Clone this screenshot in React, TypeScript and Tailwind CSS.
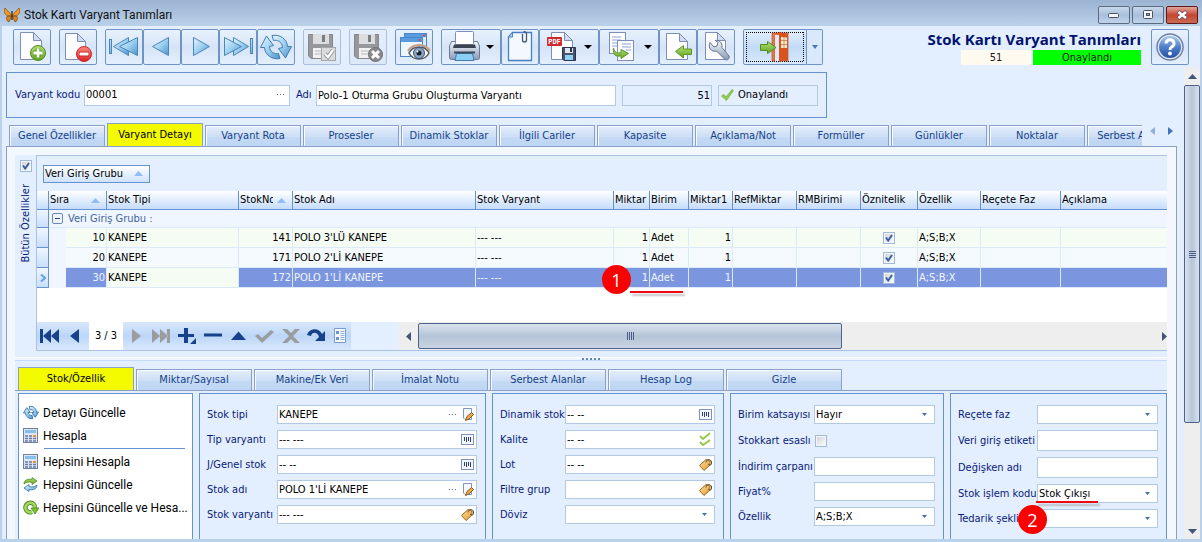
import { useId, type ReactNode } from "react";

const docFill = "#fdfdff";

function Gradients() {
  return (
    <svg width="0" height="0" className="absolute" aria-hidden="true">
      <defs>
        <linearGradient id="blue" x1="0" y1="0" x2="1" y2="1">
          <stop offset="0" stopColor="#e8f6fd" />
          <stop offset="0.5" stopColor="#9dd0f0" />
          <stop offset="1" stopColor="#4d93cc" />
        </linearGradient>
        <linearGradient id="green" x1="0" y1="0" x2="0" y2="1">
          <stop offset="0" stopColor="#b9e07a" />
          <stop offset="1" stopColor="#5fa51c" />
        </linearGradient>
        <linearGradient id="red" x1="0" y1="0" x2="0" y2="1">
          <stop offset="0" stopColor="#ff8a80" />
          <stop offset="1" stopColor="#dd1f24" />
        </linearGradient>
        <linearGradient id="steel" x1="0" y1="0" x2="0" y2="1">
          <stop offset="0" stopColor="#f4f7fb" />
          <stop offset="1" stopColor="#8a9bb8" />
        </linearGradient>
        <linearGradient id="help" x1="0" y1="0" x2="0" y2="1">
          <stop offset="0" stopColor="#a9c9f0" />
          <stop offset="0.5" stopColor="#4f7fc9" />
          <stop offset="1" stopColor="#2450a8" />
        </linearGradient>
        <linearGradient id="tag" x1="0" y1="0" x2="1" y2="1">
          <stop offset="0" stopColor="#ffe3a0" />
          <stop offset="1" stopColor="#e8962c" />
        </linearGradient>
      </defs>
    </svg>
  );
}

function Art({ w = 36, children }: { w?: number; children: ReactNode }) {
  return (
    <svg width={w} height="34" viewBox={`0 0 ${w} 34`} className="block shrink-0" aria-hidden="true">
      {children}
    </svg>
  );
}

function Doc({ x, y, w, h, fold = 8 }: { x: number; y: number; w: number; h: number; fold?: number }) {
  return (
    <g stroke="#7d8fb8" strokeWidth="1" fill={docFill} strokeLinejoin="round">
      <path d={`M${x} ${y}H${x + w - fold}L${x + w} ${y + fold}V${y + h}H${x}Z`} />
      <path d={`M${x + w - fold} ${y}V${y + fold}H${x + w}Z`} fill="#cfdcf2" />
    </g>
  );
}

const Caret = ({ x }: { x: number }) => <path d={`M${x - 4} 15h8l-4 4Z`} fill="#000" />;

const icons = {
  add: (
    <Art>
      <Doc x={6.5} y={2.5} w={21} h={27} />
      <circle cx="24" cy="23" r="7.5" fill="url(#green)" stroke="#4c8a1a" />
      <path d="M24 18.5v9M19.5 23h9" stroke="#4c8a1a" strokeWidth="4.500" />
      <path d="M24 18.5v9M19.5 23h9" stroke="#fff" strokeWidth="2.800" />
    </Art>
  ),
  remove: (
    <Art>
      <Doc x={5.5} y={3.5} w={20} h={26} />
      <circle cx="24" cy="24" r="7.5" fill="url(#red)" stroke="#c62a2a" />
      <path d="M19 24h10" stroke="#b52222" strokeWidth="4.600" />
      <path d="M19.5 24h9" stroke="#fff" strokeWidth="3" />
    </Art>
  ),
  first: (
    <Art>
      <g fill="url(#blue)" stroke="#4b86bb">
        <path d="M22.5 7.500V25.500L7.500 16.500Z" />
        <path d="M31.500 7.500V25.500L13.500 16.500Z" />
        <rect x="3.5" y="9.500" width="2" height="14" />
      </g>
    </Art>
  ),
  prev: (
    <Art>
      <path d="M24.500 7.500V25.500L8.500 16.500Z" fill="url(#blue)" stroke="#4b86bb" />
    </Art>
  ),
  next: (
    <Art>
      <path d="M11.500 7.500V25.500L27.500 16.500Z" fill="url(#blue)" stroke="#4b86bb" />
    </Art>
  ),
  last: (
    <Art>
      <g fill="url(#blue)" stroke="#4b86bb">
        <path d="M13.500 7.500V25.500L28.500 16.500Z" />
        <path d="M4.500 7.500V25.500L21.500 16.500Z" />
        <rect x="30.500" y="8.500" width="2" height="15" />
      </g>
    </Art>
  ),
  refresh: (
    <Art>
      <g fill="url(#blue)" stroke="#3f7db3" strokeLinejoin="round">
        <path d="M14 5.500C22 4 29 9 29.500 16.500H33.500L27.500 28L20.500 18.500L24.500 17.500C24 11.500 19 9.500 15.500 10.500Z" />
        <path d="M22 28.500C14 30 7 25 6.500 17.500H2.500L8.500 6L15.500 15.500L11.500 16.500C12 22.500 17 24.500 20.500 23.500Z" />
      </g>
    </Art>
  ),
  save: (
    <Art>
      <path d="M4.500 4.500H28.500V28.500H7L4.500 26Z" fill="#96989c" stroke="#85878b" />
      <rect x="9" y="4" width="16" height="10" fill="#dcdde0" />
      <rect x="18" y="5" width="3" height="7" fill="#7b7d80" />
      <rect x="9" y="18" width="15" height="10" fill="#f1f1f3" />
      <path d="M11 21h10M11 24h10" stroke="#b5b6b9" />
      <rect x="17.500" y="17.500" width="14" height="13" fill="#dadbdd" stroke="#a4a6aa" />
      <path d="M21 24l3 3 5-7" stroke="#8d8f92" strokeWidth="4" fill="none" />
      <path d="M21 24l3 3 5-7" stroke="#fff" strokeWidth="2.200" fill="none" />
    </Art>
  ),
  cancel: (
    <Art>
      <path d="M4.500 4.500H28.500V28.500H7L4.500 26Z" fill="#96989c" stroke="#85878b" />
      <rect x="9" y="4" width="16" height="10" fill="#dcdde0" />
      <rect x="18" y="5" width="3" height="7" fill="#7b7d80" />
      <rect x="9" y="18" width="15" height="10" fill="#f1f1f3" />
      <path d="M11 21h10M11 24h10" stroke="#b5b6b9" />
      <circle cx="25.500" cy="24.500" r="7" fill="#86888b" stroke="#6f7174" />
      <path d="M22 21l7 7M29 21l-7 7" stroke="#fff" strokeWidth="3" />
    </Art>
  ),
  view: (
    <Art>
      <rect x="8.500" y="3.500" width="22" height="14" fill="#d9eafb" stroke="#4a86c8" />
      <rect x="9" y="4" width="21" height="3" fill="#5a9ade" />
      <rect x="4.500" y="7.500" width="22" height="19" fill="#edf5fd" stroke="#4a86c8" />
      <rect x="5" y="8" width="21" height="4" fill="#5a9ade" />
      <circle cx="23.500" cy="10" r="1" fill="#e8402c" />
      <circle cx="28" cy="5.500" r="1" fill="#e8402c" />
      <path d="M13 23C17 15 29 15 33 23C29 31 17 31 13 23Z" fill="#fff" stroke="#555b66" strokeWidth="1.500" />
      <path d="M12 21C17 13 29 13 34 21" stroke="#c99d83" strokeWidth="2" fill="none" />
      <circle cx="23" cy="23" r="5.500" fill="#8ba5c6" stroke="#3b5272" />
      <circle cx="23" cy="23" r="2.500" fill="#16202e" />
      <circle cx="21.500" cy="21.500" r="1" fill="#fff" />
    </Art>
  ),
  print: (
    <Art w={58}>
      <path d="M9.500 11.500H35.500L37.500 16V27.500Q37.500 29.500 35.500 29.500H9.500Q7.500 29.500 7.500 27.500V16Z" fill="url(#steel)" stroke="#6c7893" />
      <rect x="13.500" y="1.500" width="18" height="13" rx="1" fill={docFill} stroke="#7d8fb8" />
      <path d="M12 14.500h21l1 3.500H11Z" fill="#3a4150" />
      <path d="M14.500 23.500h16l1.500 7h-19Z" fill="#8ccdf2" stroke="#3f7fb5" />
      <path d="M12 22.500h21" stroke="#3c4658" strokeWidth="2" />
      <Caret x={48} />
    </Art>
  ),
  attach: (
    <Art>
      <path d="M10.500 2.500H29.500V30.500H6.500V7Z" fill="#f4f9ff" stroke="#4a7fc4" strokeWidth="1.300" />
      <path d="M10.500 2.500V7H6.500Z" fill="#bcd6f4" stroke="#4a7fc4" />
      <path d="M20.500 4v6a2 2 0 0 0 4 0V4a2 2 0 0 0-3-2" stroke="#46566f" strokeWidth="1.300" fill="none" />
    </Art>
  ),
  pdf: (
    <Art w={58}>
      <Doc x={11.500} y={2.500} w={21} h={27} />
      <rect x="7" y="7" width="15" height="9" rx="1" fill="#d02a2c" />
      <text x="14.500" y="14" fontSize="7" fontWeight="bold" fill="#fff" textAnchor="middle" fontFamily="Liberation Mono, monospace">
        PDF
      </text>
      <path d="M22.500 17.500H35.500V30.500H24L22.500 29Z" fill="#46536c" stroke="#2a3347" />
      <rect x="25" y="18" width="8" height="5" fill="#dfe6f1" />
      <rect x="30" y="18" width="2" height="4" fill="#2a3347" />
      <rect x="25" y="25" width="8" height="5" fill="#8fd0f5" />
      <Caret x={48} />
    </Art>
  ),
  copy: (
    <Art w={58}>
      <rect x="9.500" y="2.500" width="16" height="21" fill={docFill} stroke="#7d8fb8" />
      <path d="M12 7h9M12 10h9M12 13h6M12 16h6" stroke="#8fa5d3" />
      <rect x="17.500" y="10.500" width="16" height="20" fill={docFill} stroke="#7d8fb8" />
      <path d="M22 14h9M22 17h9M26 20h5" stroke="#8fa5d3" />
      <path d="M13.500 18C15 23 17 23.500 21 22.500V19.500L28.500 23.500L21 28.500V25.800C16 27 12.500 25 13.500 18Z" fill="url(#green)" stroke="#5a962a" />
      <Caret x={48} />
    </Art>
  ),
  export: (
    <Art>
      <Doc x={6.500} y={3.500} w={21} h={26} />
      <path d="M15.500 21.500L23.500 15.500V19H31.500V24.500H23.500V28Z" fill="url(#green)" stroke="#5a962a" />
    </Art>
  ),
  tools: (
    <Art>
      <Doc x={7.500} y={2.500} w={20} h={27} />
      <path
        d="M12 12.500l4 4.500 3-1 1-4-3-1.500c4-1 7.500 2 7 7l7 8.500c1 3-2 5-4.500 3l-8-8c-5 1.500-9-3-6.500-8.500Z"
        fill="url(#steel)"
        stroke="#66728e"
      />
    </Art>
  ),
  help: (
    <Art>
      <circle cx="18" cy="17" r="13" fill="#e4ebf5" stroke="#7183a6" strokeWidth="1.500" />
      <circle cx="18" cy="17" r="11" fill="url(#help)" />
      <path d="M14 13.500a4 3.800 0 1 1 5.500 3.500c-1.200.6-1.500 1.200-1.500 3" fill="none" stroke="#fff" strokeWidth="3" />
      <circle cx="18" cy="23.500" r="1.900" fill="#fff" />
    </Art>
  ),
};

type IconName = keyof typeof icons;

function ToolButton({ icon, label, disabled = false }: { icon: IconName; label: string; disabled?: boolean }) {
  return (
    <button
      type="button"
      aria-label={label}
      disabled={disabled}
      className={
        disabled
          ? "rounded-[2px] border border-[#a9bfdc] bg-linear-to-b from-[#e6effb] to-[#dbe8f8]"
          : "rounded-[2px] border border-[#6f93c4] bg-linear-to-b from-[#e9f2fd] via-[#d5e4f7] to-[#e3effd]"
      }
    >
      {icons[icon]}
    </button>
  );
}

function Toolbar() {
  return (
    <div className="flex h-[42px] shrink-0 items-start pt-[3px] pr-[11px] pl-[11px]">
      <div className="flex gap-2">
        <ToolButton icon="add" label="Yeni" />
        <ToolButton icon="remove" label="Sil" />
        <div className="flex">
          <ToolButton icon="first" label="İlk" />
          <ToolButton icon="prev" label="Önceki" />
          <ToolButton icon="next" label="Sonraki" />
          <ToolButton icon="last" label="Son" />
          <ToolButton icon="refresh" label="Yenile" />
        </div>
        <ToolButton icon="save" label="Kaydet" disabled />
        <ToolButton icon="cancel" label="İptal" disabled />
        <ToolButton icon="view" label="Görüntüle" />
        <div className="flex">
          <ToolButton icon="print" label="Yazdır" />
          <ToolButton icon="attach" label="Ekler" />
          <ToolButton icon="pdf" label="PDF kaydet" />
          <ToolButton icon="copy" label="Kopyala" />
          <ToolButton icon="export" label="Aktar" />
          <ToolButton icon="tools" label="Araçlar" />
        </div>
        <div className="flex">
          <button
            type="button"
            aria-label="Çıkış"
            className="rounded-l-[2px] border border-[#6f93c4] bg-linear-to-b from-[#e3effd] via-[#c3dbf6] to-[#d6e9fd] p-0.5"
          >
            <svg width="58" height="30" viewBox="0 0 58 30" className="block" aria-hidden="true">
              <path d="M0 0.500H58M0 29.500H58M0.500 0V30M57.500 0V30" fill="none" stroke="#000" strokeDasharray="1 1" />
              <path d="M26 1H42V29H39V3H29V29H26Z" fill="#e87a48" stroke="#b5401a" strokeWidth="0.600" />
              <path d="M29 3H33V29H29Z" fill="#dce9f9" />
              <path d="M33 0L42 2V28L33 30Z" fill="#d9531e" />
              <path d="M35 5L41 5.500V16H35Z" fill="#f6ead2" />
              <path d="M38 5V16M35 8.500H41M35 12.500H41" stroke="#c9702c" strokeWidth="0.700" />
              <path d="M14.500 12.500H21.500V9.500L30 15.500L21.500 21.500V18.500H14.500Z" fill="url(#green)" stroke="#4f8d22" />
            </svg>
          </button>
          <button
            type="button"
            aria-label="Çıkış seçenekleri"
            className="flex w-4 items-center justify-center rounded-r-[2px] border border-l-0 border-[#6f93c4] bg-[#d9e9fb]"
          >
            <svg width="6" height="4" viewBox="0 0 6 4" aria-hidden="true">
              <path d="M0 0h6L3 4Z" fill="#4a76b5" />
            </svg>
          </button>
        </div>
      </div>
      <div className="ml-auto flex gap-2.5">
        <div className="flex flex-col items-end">
          <h1 className="text-[15px] leading-[21px] font-bold whitespace-nowrap text-[#00126e] [font-family:'Open_Sans','Noto_Sans',sans-serif]">
            Stok Kartı Varyant Tanımları
          </h1>
          <div className="flex gap-0.5 text-center leading-[15px] text-[#1a1a1a]">
            <span className="w-[70px] bg-[#fffaf0]">51</span>
            <span className="w-[108px] bg-[#00ff00]">Onaylandı</span>
          </div>
        </div>
        <ToolButton icon="help" label="Yardım" />
      </div>
    </div>
  );
}

function TitleBar() {
  const frame = "flex h-[18px] w-8 items-center justify-center rounded-[2px] border";
  return (
    <header className="flex h-[26px] shrink-0 items-center bg-linear-to-b from-[#9ab3d1] to-[#bbd1ea] pt-1 pr-1 pl-1">
      <svg width="16" height="16" viewBox="0 0 16 16" aria-hidden="true">
        <path d="M7.500 8L1 1C-1 4 1 8 3.500 8.500L7 9ZM8.500 8L15 1C17 4 15 8 12.500 8.500L9 9Z" fill="#f39a1d" stroke="#8a4a0c" strokeWidth="0.700" />
        <path d="M7.500 9L3 9.500C2 12 3 14.500 5 15ZM8.500 9L13 9.500C14 12 13 14.500 11 15Z" fill="#e9841a" stroke="#7a3f0a" strokeWidth="0.700" />
        <path d="M8 4V13" stroke="#2b1a08" strokeWidth="1.200" />
      </svg>
      <span className="ml-1 text-xs leading-4 text-[#111] [font-family:Roboto,'Open_Sans',sans-serif]">Stok Kartı Varyant Tanımları</span>
      <div className="ml-auto flex gap-0.5">
        <button type="button" aria-label="Simge durumuna küçült" className={`${frame} border-[#5c6b80] bg-linear-to-b from-[#c7d8ec] via-[#a9bfdb] to-[#c0d4ec]`}>
          <svg width="12" height="6" viewBox="0 0 12 6" aria-hidden="true">
            <rect x="0.500" y="1.500" width="10" height="4" rx="1" fill="#f5f5f5" stroke="#4a5362" />
          </svg>
        </button>
        <button type="button" aria-label="Ekranı kapla" className={`${frame} border-[#5c6b80] bg-linear-to-b from-[#c7d8ec] via-[#a9bfdb] to-[#c0d4ec]`}>
          <svg width="11" height="10" viewBox="0 0 11 10" aria-hidden="true">
            <rect x="0.500" y="0.500" width="9" height="8" rx="1" fill="#f5f5f5" stroke="#4a5362" />
            <rect x="3.500" y="3.500" width="3" height="2" fill="#8aa2c4" stroke="#4a5362" />
          </svg>
        </button>
        <button type="button" aria-label="Kapat" className={`${frame} border-[#5e1a16] bg-linear-to-b from-[#e0a49b] via-[#c4452f] to-[#c96a56]`}>
          <svg width="13" height="10" viewBox="0 0 13 10" aria-hidden="true">
            <path d="M2 1.500L10.500 8.500M10.500 1.500L2 8.500" stroke="#6a5560" strokeWidth="4" />
            <path d="M2.500 2L10 8M10 2L2.500 8" stroke="#fff" strokeWidth="2.600" />
          </svg>
        </button>
      </div>
    </header>
  );
}

function HeaderFields() {
  return (
    <section className="ml-1 flex h-[46px] max-w-[821px] items-center border border-[#6593cf] pr-2 pl-2 text-[#0a1a78]">
      <label htmlFor="kod" className="w-[69px] whitespace-nowrap">
        Varyant kodu
      </label>
      <div className="flex h-[21px] w-[206px] items-center border border-[#b3c8e4] bg-white">
        <input id="kod" defaultValue="00001" className="min-w-0 flex-1 pl-px text-black outline-none" />
        <DotsButton />
      </div>
      <label htmlFor="ad" className="ml-1.5 w-5 whitespace-nowrap">
        Adı
      </label>
      <input id="ad" defaultValue="Polo-1 Oturma Grubu Oluşturma Varyantı" className="h-[21px] min-w-0 flex-1 border border-[#b3c8e4] bg-white pl-px text-black outline-none" />
      <input aria-label="Durum kodu" readOnly value="51" className="ml-1.5 h-[21px] w-[90px] border border-[#b3c8e4] pr-px text-right text-black outline-none" />
      <div className="ml-1.5 flex h-[21px] w-[100px] items-center gap-1 border border-[#b3c8e4] pl-0.5 text-black">
        <svg width="13" height="12" viewBox="0 0 13 12" aria-hidden="true">
          <path d="M0.500 7L3 5.500L5 8L11 0.500L12.500 1.500L5.500 11.500Z" fill="#8fce3c" stroke="#7fa84c" strokeWidth="0.700" />
        </svg>
        Onaylandı
      </div>
    </section>
  );
}

function DotsButton() {
  return (
    <button type="button" aria-label="Seç" className="flex h-full w-4 items-center justify-center">
      <svg width="8" height="2" viewBox="0 0 8 2" aria-hidden="true">
        <path d="M0 0.500h1M3 0.500h1M6 0.500h1" stroke="#5b6f9c" />
      </svg>
    </button>
  );
}

const tabBase =
  "mr-0.5 h-[21px] shrink-0 border border-b-0 border-[#8ba0c8] bg-linear-to-b from-[#e6effb] from-0% via-[#cfe0f6] via-45% to-[#c6dbf5] text-[#15428b] shadow-[inset_1px_1px_0_#f7fbff,inset_0_-9px_0_#b4d0f266]";
const tabActive = "relative mr-0.5 shrink-0 border border-b-0 border-[#8ba0c8] bg-[#f4fa00] text-black";

function MainTabs() {
  const tabs = ["Genel Özellikler", "Varyant Detayı", "Varyant Rota", "Prosesler", "Dinamik Stoklar", "İlgili Cariler", "Kapasite", "Açıklama/Not", "Formüller", "Günlükler", "Noktalar", "Serbest Alanlar"];
  return (
    <div className="flex h-[23px] items-end">
      <div role="tablist" className="ml-[7px] flex min-w-0 flex-1 items-end overflow-hidden">
        {tabs.map((tab, i) => (
          <button key={tab} type="button" role="tab" aria-selected={i === 1} className={`w-24 ${i === 1 ? `${tabActive} h-[23px]` : tabBase}`}>
            <span className="block text-center whitespace-nowrap">{tab}</span>
          </button>
        ))}
      </div>
      <div className="flex h-full w-[35px] shrink-0 items-start gap-2.5 pt-0.5 pl-1.5">
        <button type="button" aria-label="Sekmeleri sola kaydır" className="flex w-2 justify-center pt-0.5">
          <svg width="5" height="8" viewBox="0 0 5 8" aria-hidden="true">
            <path d="M5 0V8L0 4Z" fill="#8fb0da" />
          </svg>
        </button>
        <button type="button" aria-label="Sekmeleri sağa kaydır" className="flex w-2 justify-center pt-0.5">
          <svg width="5" height="8" viewBox="0 0 5 8" aria-hidden="true">
            <path d="M0 0V8L5 4Z" fill="#3f73bf" />
          </svg>
        </button>
      </div>
    </div>
  );
}

function CheckBox({ checked, label, id }: { checked: boolean; label?: string; id?: string }) {
  return (
    <span className="relative inline-block size-3 align-middle">
      <input
        id={id}
        type="checkbox"
        defaultChecked={checked}
        aria-label={label}
        className="peer block size-3 appearance-none border border-[#a3b8da] bg-linear-to-br from-[#cdd1d6] to-white shadow-[inset_0_0_0_1px_#f2f6fc]"
      />
      <svg width="8" height="8" viewBox="0 0 8 8" className="pointer-events-none absolute top-0.5 left-0.5 hidden peer-checked:block" aria-hidden="true">
        <path d="M1 3.500L3.200 6.500L7 1" fill="none" stroke="#3d5f9e" strokeWidth="2" />
      </svg>
    </span>
  );
}

const SortMark = () => (
  <svg width="9" height="5" viewBox="0 0 9 5" className="shrink-0" aria-hidden="true">
    <path d="M0 5L4.500 0L9 5Z" fill="#8fbdf5" />
  </svg>
);

const headers: { name: string; sorted?: boolean }[] = [
  { name: "Stok Tipi" },
  { name: "StokNo", sorted: true },
  { name: "Stok Adı" },
  { name: "Stok Varyant" },
  { name: "Miktar" },
  { name: "Birim" },
  { name: "Miktar1" },
  { name: "RefMiktar" },
  { name: "RMBirimi" },
  { name: "Öznitelik" },
  { name: "Özellik" },
  { name: "Reçete Faz" },
  { name: "Açıklama" },
];

const rows = [
  { sira: 10, no: 141, ad: "POLO 3'LÜ KANEPE" },
  { sira: 20, no: 171, ad: "POLO 2'Lİ KANEPE" },
  { sira: 30, no: 172, ad: "POLO 1'Lİ KANEPE" },
];

const headCell = "overflow-hidden border-r border-b border-[#6593cf] bg-linear-to-b from-white to-[#c4dcfb] pl-px text-left font-normal whitespace-nowrap";

function Badge({ children, className }: { children: ReactNode; className: string }) {
  return (
    <span className={`absolute z-10 flex size-[29px] items-center justify-center rounded-full bg-[#fa0000] text-lg leading-none text-white [font-family:'Open_Sans',sans-serif] ${className}`}>
      {children}
    </span>
  );
}

function Underline({ className }: { className: string }) {
  return <span className={`absolute z-10 h-0.5 bg-[#ee0a14] shadow-[2px_3px_2px_#9999] ${className}`} />;
}

function Grid() {
  return (
    <table className="w-full table-fixed border-separate border-spacing-0 text-black">
      <colgroup>
        <col className="w-3" />
        <col className="w-[17px]" />
        <col className="w-[41px]" />
        <col className="w-[132px]" />
        <col className="w-[54px]" />
        <col className="w-[183px]" />
        <col className="w-[138px]" />
        <col className="w-9" />
        <col className="w-[39px]" />
        <col className="w-11" />
        <col className="w-16" />
        <col className="w-16" />
        <col className="w-[57px]" />
        <col className="w-[63px]" />
        <col className="w-20" />
        <col />
      </colgroup>
      <thead>
        <tr className="h-[19px]">
          <th className={headCell} aria-label="Satır" />
          <th colSpan={2} className={headCell}>
            <span className="flex items-center justify-between pr-1.5">
              Sıra
              <SortMark />
            </span>
          </th>
          {headers.map((h, i) => (
            <th key={h.name} className={`${headCell} ${i === headers.length - 1 ? "border-r-0" : ""}`}>
              {h.sorted ? (
                <span className="flex items-center justify-between pr-1.5">
                  <span className="w-[33px] overflow-hidden">{h.name}</span>
                  <SortMark />
                </span>
              ) : (
                h.name
              )}
            </th>
          ))}
        </tr>
      </thead>
      <tbody>
        <tr className="h-[18px]">
          <td className="border-r border-b border-[#6593cf] bg-linear-to-b from-[#f0f6ff] to-[#c9dffb]" />
          <td colSpan={15} className="border-b border-[#dce9f9] bg-[#f0f6ff] pl-[3px] text-[#42659c]">
            <span className="flex items-center gap-[5px]">
              <button type="button" aria-label="Grubu daralt" className="flex size-[11px] items-center justify-center rounded-[2px] border border-[#6d86b5] bg-[#eef4fd]">
                <span className="h-px w-[5px] bg-[#2c4677]" />
              </button>
              Veri Giriş Grubu :
            </span>
          </td>
        </tr>
        {rows.map((r, i) => {
          const sel = i === 2;
          const cell = `border-r border-b border-[#dce9f9] px-px whitespace-nowrap ${sel ? "bg-[#7b96df] text-[#f2f5fd]" : i === 0 ? "bg-[#f4fcf3]" : "bg-[#f5fafe]"}`;
          return (
            <tr key={r.sira} className="h-5">
              <td className="border-r border-b border-[#6593cf] bg-linear-to-b from-[#f0f6ff] to-[#c9dffb]">
                {sel && (
                  <svg width="7" height="8" viewBox="0 0 7 8" className="ml-[3px]" aria-hidden="true">
                    <path d="M1 0.500L5 4L1 7.500" fill="none" stroke="#5ea2e8" strokeWidth="2" />
                  </svg>
                )}
              </td>
              <td className="bg-[#f0f6ff]" />
              <td className={`${cell} text-right`}>{r.sira}</td>
              <td className={`border-r border-b border-[#dce9f9] px-px ${i === 1 ? "bg-[#f5fafe]" : "bg-[#f4fcf3]"}`}>KANEPE</td>
              <td className={`${cell} text-right`}>{r.no}</td>
              <td className={cell}>{r.ad}</td>
              <td className={cell}>--- ---</td>
              <td className={`${cell} relative text-right`}>
                1
                {sel && (
                  <>
                    <Badge className="-top-[3px] -left-[12px]">1</Badge>
                    <Underline className="top-[23px] left-4 w-[53px]" />
                  </>
                )}
              </td>
              <td className={cell}>Adet</td>
              <td className={`${cell} text-right`}>1</td>
              <td className={cell} />
              <td className={cell} />
              <td className={`${cell} text-center leading-none`}>
                <CheckBox checked label={`Öznitelik ${r.sira}`} />
              </td>
              <td className={cell}>A;S;B;X</td>
              <td className={cell} />
              <td className={`${cell} border-r-0`} />
            </tr>
          );
        })}
      </tbody>
    </table>
  );
}

const navy = "#15428b";
const grey = "#9a9ca0";

function NavButton({ label, w, children }: { label: string; w: number; children: ReactNode }) {
  return (
    <button type="button" aria-label={label}>
      <svg width={w} height="20" viewBox={`0 0 ${w} 20`} className="block" aria-hidden="true">
        {children}
      </svg>
    </button>
  );
}

function Navigator() {
  return (
    <div className="flex h-7 shrink-0">
      <div className="flex items-center bg-linear-to-b from-[#d9e8fb] via-[#bcd6f8] to-[#d9e8fb] pr-1">
        <div className="flex gap-[11px] pr-2.5 pl-[3px]">
          <NavButton label="İlk kayıt" w={19}>
            <path d="M0 3h3v14H0zM11 3v14l-8-7ZM19 3v14l-8-7Z" fill={navy} />
          </NavButton>
          <NavButton label="Önceki kayıt" w={9}>
            <path d="M9 3v14L0 10Z" fill={navy} />
          </NavButton>
        </div>
        <span className="flex h-full w-[34px] items-center justify-center bg-white text-black">3 / 3</span>
        <div className="flex gap-[7px] pl-[9px]">
          <NavButton label="Sonraki kayıt" w={12}>
            <path d="M0 3v14l9-7Z" fill={grey} />
          </NavButton>
          <NavButton label="Son kayıt" w={20}>
            <path d="M1 3v14l8-7ZM9 3v14l8-7ZM16 3h3v14h-3z" fill={grey} />
          </NavButton>
          <NavButton label="Kayıt ekle" w={19}>
            <path d="M0 8h6V2h4v6h6v3h-6v6H6v-6H0ZM18 12v6h-6Z" fill={navy} />
          </NavButton>
          <NavButton label="Kayıt sil" w={20}>
            <path d="M0 7.500h18v3H0Z" fill={navy} />
          </NavButton>
          <NavButton label="Düzenle" w={17}>
            <path d="M0 14L7.500 5.500L15 14Z" fill={navy} />
          </NavButton>
          <NavButton label="Onayla" w={19}>
            <path d="M0 10l3-2 4 4 9-8 3 2L7 17Z" fill={grey} />
          </NavButton>
          <NavButton label="Vazgeç" w={19}>
            <path d="M1 3h5l4 4 4-4h5l-7 7 7 7h-5l-4-4-4 4H1l7-7Z" fill={grey} />
          </NavButton>
          <NavButton label="Yenile" w={19}>
            <path d="M0 9C2 2 12 1 15 8L18 5V15H8L12 11C11 6 5 5 4 10Z" fill={navy} />
          </NavButton>
          <NavButton label="Form görünümü" w={14}>
            <path d="M1.500 2.500h11v14h-11Z" fill="#f5f9ff" stroke="#7d9cce" />
            <path d="M3 5h3v3H3zM3 11h3v3H3z" fill="#6e93cc" />
            <path d="M7.500 5.500h4M7.500 7.500h4M7.500 9.500h4M7.500 11.500h4M7.500 13.500h4" stroke="#8db0e2" />
          </NavButton>
        </div>
      </div>
      <div className="ml-12 flex min-w-0 flex-1 bg-[#eeeeee]">
        <button type="button" aria-label="Sola kaydır" className="flex w-[19px] items-center justify-center">
          <svg width="5" height="9" viewBox="0 0 5 9" aria-hidden="true">
            <path d="M5 0V9L0 4.500Z" fill="#41547a" />
          </svg>
        </button>
        <div className="flex min-w-0 flex-1">
          <div className="my-px flex w-[57%] items-center justify-center gap-px rounded-[2px] border border-[#4f628c] bg-linear-to-b from-[#dbe3ed] from-0% via-[#b5c4d8] via-50% to-[#c9d4e2]">
            {[0, 1, 2, 3].map((k) => (
              <span key={k} className="h-2 w-px bg-[#4a5d85]" />
            ))}
          </div>
        </div>
        <button type="button" aria-label="Sağa kaydır" className="flex w-[5px] items-center">
          <svg width="5" height="9" viewBox="0 0 5 9" aria-hidden="true">
            <path d="M0 0V9L5 4.500Z" fill="#41547a" />
          </svg>
        </button>
      </div>
    </div>
  );
}

function DetailGrid() {
  return (
    <div className="flex h-[196px] shrink-0">
      <aside className="flex w-[21px] shrink-0 flex-col items-center gap-3 bg-[#e3efff] pt-[5px] text-[#0a1a78]">
        <CheckBox checked id="butun" />
        <label htmlFor="butun" className="rotate-180 whitespace-nowrap [writing-mode:vertical-rl]">
          Bütün Özellikler
        </label>
      </aside>
      <div className="flex min-w-0 flex-1 flex-col border-t border-b border-l border-[#a9c1e4]">
        <div className="flex h-[35px] shrink-0 items-center pl-1.5">
          <button type="button" className="flex h-[18px] w-[107px] items-center justify-between border border-[#6593cf] bg-linear-to-b from-white to-[#cfe2fb] pr-1.5 pl-px text-black">
            Veri Giriş Grubu
            <SortMark />
          </button>
        </div>
        <div className="flex-1 bg-white">
          <Grid />
        </div>
        <Navigator />
      </div>
    </div>
  );
}

function Splitter() {
  return (
    <div className="flex h-4 shrink-0 items-start justify-center pt-1.5">
      <div className="flex h-1 w-full justify-center gap-0.5 border-t border-b border-t-white border-b-[#c3daf9] bg-[#eef5ff]">
        {[0, 1, 2, 3, 4].map((k) => (
          <span key={k} className="size-0.5 bg-[#5c86c2]" />
        ))}
      </div>
    </div>
  );
}

function SubTabs() {
  const tabs = ["Stok/Özellik", "Miktar/Sayısal", "Makine/Ek Veri", "İmalat Notu", "Serbest Alanlar", "Hesap Log", "Gizle"];
  return (
    <div role="tablist" className="flex h-[23px] shrink-0 items-end pl-[3px]">
      {tabs.map((tab, i) => (
        <button key={tab} type="button" role="tab" aria-selected={i === 0} className={`w-[116px] ${i === 0 ? `${tabActive} h-[23px]` : tabBase}`}>
          {tab}
        </button>
      ))}
    </div>
  );
}

const smallIcons = {
  pencil: (
    <>
      <path d="M2.500 1.500H10.500V12.500H4L2.500 11Z" fill="#f5f8fd" stroke="#7d95c0" />
      <path d="M4.500 13.500L6 9.500L10.500 5.500L12.500 7.500L8 12Z" fill="#e7a950" stroke="#8a5a1e" />
    </>
  ),
  barcode: (
    <>
      <rect x="0.500" y="2.500" width="12" height="10" fill="#f2f6fc" stroke="#7d95c0" />
      <path d="M3.500 5v4M5.500 5v5M7.500 5v4M9.500 5v5" stroke="#2d3f66" />
    </>
  ),
  checks: (
    <path d="M1 4l3 3 7-6M1 10l3 3 7-5" fill="none" stroke="#94c84a" strokeWidth="1.800" />
  ),
  tag: (
    <>
      <path d="M0.500 8.500L7 2.500L11 4V8L5 13.500Z" fill="url(#tag)" stroke="#9a6a20" />
      <path d="M7 5.500C7 2 12 1.500 12.500 5S11 8.500 9 7" fill="none" stroke="#4f4630" />
    </>
  ),
};

function SmallIconButton({ icon, label }: { icon: keyof typeof smallIcons; label: string }) {
  return (
    <button type="button" aria-label={label} className="mr-0.5 shrink-0">
      <svg width="13" height="15" viewBox="0 0 13 15" className="block" aria-hidden="true">
        {smallIcons[icon]}
      </svg>
    </button>
  );
}

type FieldProps = {
  label: string;
  value?: string;
  icon?: keyof typeof smallIcons;
  dots?: boolean;
  select?: boolean;
  checkbox?: boolean;
  tall?: boolean;
  labelWidth: string;
  children?: ReactNode;
};

function Field({ label, value = "", icon, dots, select, checkbox, tall, labelWidth, children }: FieldProps) {
  const id = useId();
  return (
    <div className="relative flex items-center">
      <label htmlFor={id} className={`${labelWidth} shrink-0 whitespace-nowrap text-[#0a1a78]`}>
        {label}
      </label>
      {checkbox ? (
        <div className="flex h-[21px] items-center pl-px">
          <CheckBox id={id} checked={false} />
        </div>
      ) : (
        <div className={`relative flex min-w-0 flex-1 items-center border border-[#b3c8e4] bg-white text-black ${tall ? "h-[21px]" : "h-[19px]"}`}>
          {select ? (
            <>
              <select id={id} defaultValue={value} className="h-full min-w-0 flex-1 appearance-none pl-px outline-none">
                <option value={value}>{value}</option>
              </select>
              <svg width="5" height="3" viewBox="0 0 5 3" className="pointer-events-none absolute top-[7px] right-[7px]" aria-hidden="true">
                <path d="M0 0h5L2.500 3Z" fill="#3f6fb0" />
              </svg>
            </>
          ) : (
            <input id={id} defaultValue={value} className="h-full min-w-0 flex-1 pl-px outline-none" />
          )}
          {dots && <DotsButton />}
          {icon && <SmallIconButton icon={icon} label={`${label} seç`} />}
        </div>
      )}
      {children}
    </div>
  );
}

const panel = "flex min-w-0 flex-col gap-1.5 border border-[#6593cf] bg-[#e3efff] pt-[11px] pr-2 pl-[7px]";

const CalcIcon = () => (
  <svg width="15" height="15" viewBox="0 0 15 15" aria-hidden="true">
    <rect x="0.500" y="0.500" width="14" height="14" fill="#dfe6f3" stroke="#6f7fa6" />
    <rect x="2" y="2" width="11" height="3" fill="#86bdea" />
    <path d="M2 8h3M6 8h3M2 10.500h3M6 10.500h3M2 13h3M6 13h3M10 10.500h3M10 13h3" stroke="#6a7aa3" strokeWidth="1.600" />
    <path d="M10 8h3" stroke="#e8862a" strokeWidth="1.800" />
  </svg>
);

const actions: { label: string; icon: ReactNode; divided?: boolean }[] = [
  {
    label: "Detayı Güncelle",
    icon: (
      <svg width="16" height="15" viewBox="0 0 36 34" aria-hidden="true">
        <g fill="url(#blue)" stroke="#2f6da8" strokeWidth="2">
          <path d="M14 3C23 2 30 8 30.500 16H35L27.500 28L19.500 17H24.500C24 11.500 19 9.500 15.500 10.500Z" />
          <path d="M22 31C13 32 6 26 5.500 18H1L8.500 6L16.500 17H11.500C12 22.500 17 24.500 20.500 23.500Z" />
        </g>
      </svg>
    ),
  },
  { label: "Hesapla", icon: <CalcIcon /> },
  { label: "Hepsini Hesapla", icon: <CalcIcon />, divided: true },
  {
    label: "Hepsini Güncelle",
    icon: (
      <svg width="15" height="15" viewBox="0 0 15 15" aria-hidden="true">
        <path d="M1 7C1 3 5 1.500 9 2.500V0.500L14 4L9 7.500V5.500C6 4.500 3.500 5 1 7Z" fill="url(#green)" stroke="#4f8d22" strokeWidth="0.800" />
        <path d="M14 8C14 12 10 13.500 6 12.500V14.500L1 11L6 7.500V9.500C9 10.500 11.500 10 14 8Z" fill="url(#blue)" stroke="#2f6da8" strokeWidth="0.800" />
      </svg>
    ),
  },
  {
    label: "Hepsini Güncelle ve Hesa...",
    icon: (
      <svg width="16" height="15" viewBox="0 0 16 15" aria-hidden="true">
        <path d="M9 12A4.800 4.800 0 1 1 12 8" fill="none" stroke="#4f8d22" strokeWidth="4.400" />
        <path d="M9 12A4.800 4.800 0 1 1 12 8" fill="none" stroke="#a5d65c" strokeWidth="2.600" />
        <path d="M8 8H16L12 14Z" fill="#7cbf2c" stroke="#4f8d22" strokeWidth="0.800" />
      </svg>
    ),
  },
];

function DetailPanels() {
  return (
    <div className="flex min-h-[150px] flex-1 gap-1.5 border-t border-[#8ba0c8] pt-0.5 pl-[3px]">
      <ul className="w-[175px] shrink-0 border border-[#6593cf] bg-white pt-[7px] pr-[7px] pl-1 text-xs text-black [font-family:Roboto,'Open_Sans',sans-serif]">
        {actions.map((a) => (
          <li key={a.label}>
            {a.divided && <div className="mt-px mb-px ml-[21px] h-px bg-[#6593cf]" />}
            <button type="button" className="flex h-[23px] items-center gap-1 leading-[18px] whitespace-nowrap">
              <span className="flex w-4 shrink-0">{a.icon}</span>
              {a.label}
            </button>
          </li>
        ))}
      </ul>
      <div className={`${panel} shrink grow basis-[287px]`}>
        <Field labelWidth="w-[70px]" label="Stok tipi" value="KANEPE" dots icon="pencil" />
        <Field labelWidth="w-[70px]" label="Tip varyantı" value="--- ---" icon="barcode" />
        <Field labelWidth="w-[70px]" label="J/Genel stok" value="-- --" icon="barcode" />
        <Field labelWidth="w-[70px]" label="Stok adı" value="POLO 1'Lİ KANEPE" dots icon="pencil" />
        <Field labelWidth="w-[70px]" label="Stok varyantı" value="--- ---" icon="tag" />
      </div>
      <div className={`${panel} shrink grow basis-[232px]`}>
        <Field labelWidth="w-[65px]" label="Dinamik stok" value="-- --" icon="barcode" />
        <Field labelWidth="w-[65px]" label="Kalite" value="-- --" icon="checks" />
        <Field labelWidth="w-[65px]" label="Lot" value="-- --" icon="tag" />
        <Field labelWidth="w-[65px]" label="Filtre grup" icon="tag" />
        <Field labelWidth="w-[65px]" label="Döviz" select />
      </div>
      <div className={`${panel} shrink grow basis-[214px]`}>
        <Field labelWidth="w-[76px]" label="Birim katsayısı" value="Hayır" select />
        <Field labelWidth="w-[76px]" label="Stokkart esaslı" checkbox />
        <Field labelWidth="w-[76px]" label="İndirim çarpanı" />
        <Field labelWidth="w-[76px]" label="Fiyat%" />
        <Field labelWidth="w-[76px]" label="Özellik" value="A;S;B;X" select />
      </div>
      <div className={`${panel} shrink grow basis-[217px]`}>
        <Field labelWidth="w-[79px]" label="Reçete faz" select />
        <Field labelWidth="w-[79px]" label="Veri giriş etiketi" tall />
        <Field labelWidth="w-[79px]" label="Değişken adı" tall />
        <Field labelWidth="w-[79px]" label="Stok işlem kodu" value="Stok Çıkışı" select>
          <Underline className="top-[17px] left-[78px] w-[62px]" />
        </Field>
        <Field labelWidth="w-[79px]" label="Tedarik şekli" select>
          <Badge className="-top-1 left-[60px]">2</Badge>
        </Field>
      </div>
    </div>
  );
}

function VerticalScrollbar() {
  return (
    <div className="flex w-4 shrink-0 flex-col bg-[#eeeeee]">
      <button type="button" aria-label="Yukarı kaydır" className="flex h-[17px] shrink-0 items-center justify-center">
        <svg width="9" height="5" viewBox="0 0 9 5" aria-hidden="true">
          <path d="M0 5L4.500 0L9 5Z" fill="#41547a" />
        </svg>
      </button>
      <div className="min-h-0 flex-1">
        <div className="flex h-[77%] flex-col items-center justify-center gap-px rounded-[2px] border border-[#4f628c] bg-linear-to-r from-[#dbe3ed] from-0% via-[#b5c4d8] via-50% to-[#dbe3ed]">
          {[0, 1, 2, 3].map((k) => (
            <span key={k} className="h-px w-[7px] bg-[#4a5d85]" />
          ))}
        </div>
      </div>
      <button type="button" aria-label="Aşağı kaydır" className="flex h-[15px] shrink-0 items-center justify-center">
        <svg width="9" height="5" viewBox="0 0 9 5" aria-hidden="true">
          <path d="M0 0H9L4.500 5Z" fill="#41547a" />
        </svg>
      </button>
    </div>
  );
}

export default function App() {
  return (
    <div className="flex h-screen flex-col overflow-hidden border-b-[3px] border-[#b9d1ea] bg-[#b9d1ea] text-[11px] leading-[14px] [font-family:'DejaVu_Sans_Condensed',Tahoma,'DejaVu_Sans',sans-serif]">
      <Gradients />
      <TitleBar />
      <main className="mr-0.5 ml-0.5 flex min-h-0 flex-1 flex-col bg-[#e3efff]">
        <Toolbar />
        <div className="flex min-h-0 flex-1">
          <div className="flex min-w-0 flex-1 flex-col overflow-hidden pt-1 pr-[7px]">
            <HeaderFields />
            <div className="mt-[5px] ml-1 flex min-h-0 flex-1 flex-col">
              <div className="-ml-1">
                <MainTabs />
              </div>
              <div className="flex min-h-0 flex-1 flex-col border-t border-r border-l border-[#8ba0c8] bg-[#f3f8ff] pt-2 pr-[9px] pl-2">
                <div className="flex min-h-0 flex-1 flex-col bg-[#e3efff]">
                  <DetailGrid />
                  <Splitter />
                  <SubTabs />
                  <DetailPanels />
                </div>
              </div>
            </div>
          </div>
          <VerticalScrollbar />
        </div>
      </main>
    </div>
  );
}
